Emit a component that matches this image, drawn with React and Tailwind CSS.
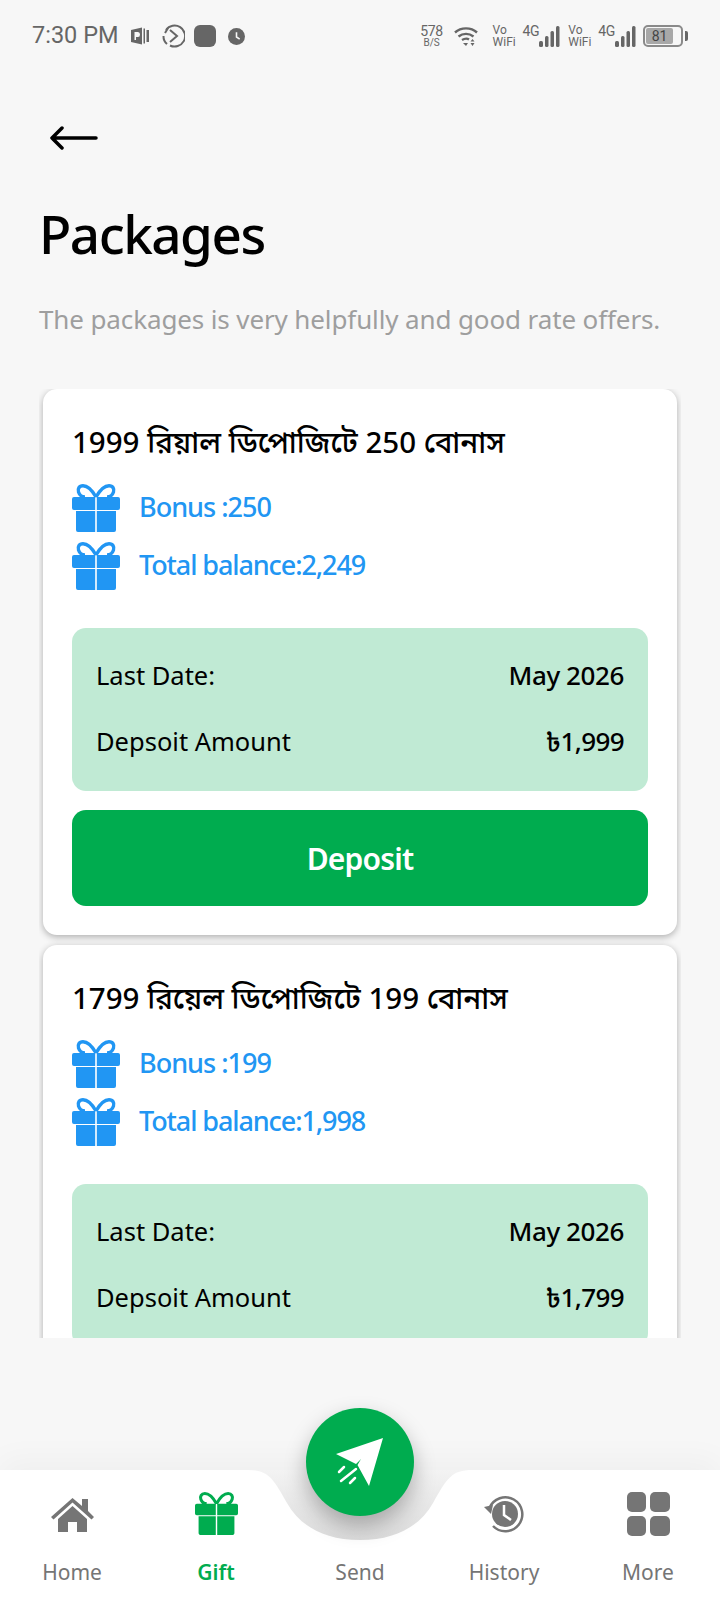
import React from 'react';

const packages = [
  { title: '1999 রিয়াল ডিপোজিটে 250 বোনাস', bonus: '250', total: '2,249', amount: '৳1,999' },
  { title: '1799 রিয়েল ডিপোজিটে 199 বোনাস', bonus: '199', total: '1,998', amount: '৳1,799' },
];

const GiftIcon = ({ className }) => (
  <svg viewBox="0 0 48 48" className={className} fill="currentColor">
    <path d="M24 13 C20 6 15 1.700 11 1.700 C7 1.700 5.500 5 6.500 8 C7.500 11 10 13 13 13 M24 13 C28 6 33 1.700 37 1.700 C41 1.700 42.500 5 41.500 8 C40.500 11 38 13 35 13" fill="none" stroke="currentColor" strokeWidth="3.400" />
    <path d="M2 13 H23.200 V26 H2 Q0 26 0 24 V15 Q0 13 2 13 Z M24.800 13 H46 Q48 13 48 15 V24 Q48 26 46 26 H24.800 Z" />
    <path d="M4 27 H23.200 V48 H6 Q4 48 4 46 Z M24.800 27 H44 V46 Q44 48 42 48 H24.800 Z" />
  </svg>
);

const SignalBars = () => (
  <svg viewBox="0 0 21 21" className="w-[21px] h-[21px]" fill="#666666">
    <rect x="0" y="15" width="4" height="6" rx="1.500" />
    <rect x="6" y="10" width="3.500" height="11" rx="1.500" />
    <rect x="11.500" y="5" width="3.500" height="16" rx="1.500" />
    <rect x="17" y="0" width="3.500" height="21" rx="1.500" />
  </svg>
);

const VoWifi = () => (
  <div className="flex flex-col text-[12px] leading-[12px] w-[24px] whitespace-nowrap">
    <span>Vo</span>
    <span>WiFi</span>
  </div>
);

const StatusBar = () => (
  <div className="h-[72px] flex items-center pl-[32px] pr-[32px] text-[#666666] font-['Roboto',sans-serif]">
    <span className="text-[23.5px] leading-none w-[88px] whitespace-nowrap">7:30 PM</span>
    <svg viewBox="0 0 18 18" className="w-[18px] h-[18px] ml-[11px]" fill="#666666">
      <path d="M0 3 L11 0.500 V17.500 L0 15 Z" />
      <path d="M12.500 1.500 H14 V16.500 H12.500 Z M15.500 3 H18 V15 H15.500 Z" />
      <path d="M3.500 5 H7 Q9 5 9 7.500 Q9 10 7 10 H5 V13 H3.500 Z" fill="#f7f7f7" />
    </svg>
    <svg viewBox="0 0 24 24" className="w-[24px] h-[24px] ml-[12px]" fill="none" stroke="#666666" strokeWidth="2">
      <path d="M5 6 A10.500 10.500 0 1 1 9 21.500" />
      <path d="M7 4 L4 9 M2.500 12 A10 10 0 0 0 6 20" />
      <path d="M9 6 L16 12 L9 18" />
    </svg>
    <div className="w-[22px] h-[22px] rounded-[6px] bg-[#666666] ml-[9px]" />
    <svg viewBox="0 0 16 16" className="w-[17px] h-[17px] ml-[12px]">
      <circle cx="8" cy="8" r="8" fill="#666666" />
      <path d="M8 4 V8.500 L11 10.500" stroke="#f7f7f7" strokeWidth="1.500" fill="none" />
    </svg>

    <div className="ml-auto flex items-center">
      <div className="flex flex-col items-center w-[24px] leading-none">
        <span className="text-[14px] leading-[13px] tracking-tight">578</span>
        <span className="text-[10px] leading-[10px]">B/S</span>
      </div>
      <svg viewBox="0 0 24 20" className="w-[24px] h-[20px] ml-[10px]" fill="none" stroke="#666666" strokeWidth="2.400">
        <path d="M1 6.500 C7 1 17 1 23 6.500" />
        <path d="M4.500 10.500 C9 7 15 7 19.500 10.500" />
        <path d="M8 14 C10.500 12.500 13.500 12.500 15 13.500" />
        <path d="M9 17 L12 20 L14 17 Z" fill="#666666" stroke="none" />
        <path d="M18.500 13 L20.500 15.500 H16.500 Z M18.500 20 L16.500 17 H20.500 Z" fill="#666666" stroke="none" />
      </svg>
      <div className="ml-[15px]"><VoWifi /></div>
      <span className="ml-[6px] self-start text-[14px] leading-none tracking-tight">4G</span>
      <SignalBars />
      <div className="ml-[8px]"><VoWifi /></div>
      <span className="ml-[6px] self-start text-[14px] leading-none tracking-tight">4G</span>
      <SignalBars />
      <div className="ml-[7px] w-[40px] h-[22px] rounded-[5px] border-2 border-[#8a8a8a] p-[1px] flex">
        <div className="w-[27px] bg-[#a8a8a8] rounded-[2px] text-[14px] leading-[16px] text-center text-[#444444]">81</div>
      </div>
      <div className="ml-[2px] w-[3px] h-[10px] rounded-r-[2px] bg-[#666666]" />
    </div>
  </div>
);

const PackageCard = ({ pkg }) => (
  <div className="bg-white rounded-[14px] shadow-[0_2px_7px_rgba(0,0,0,0.3)] pt-[29px] px-[29px] pb-[29px] shrink-0">
    <h2 className="text-[29.5px] leading-[48px] font-medium text-black whitespace-nowrap">{pkg.title}</h2>
    <div className="mt-[18px] flex flex-col gap-[10px]">
      <div className="flex items-center gap-[19px] text-[#2196f3]">
        <GiftIcon className="w-[48px] h-[48px]" />
        <span className="text-[27px] leading-none font-medium tracking-[-1px] pb-[3px]">Bonus :{pkg.bonus}</span>
      </div>
      <div className="flex items-center gap-[19px] text-[#2196f3]">
        <GiftIcon className="w-[48px] h-[48px]" />
        <span className="text-[27px] leading-none font-medium tracking-[-1.1px] pb-[3px]">Total balance:{pkg.total}</span>
      </div>
    </div>
    <div className="mt-[38px] bg-[#c0ead4] rounded-[14px] h-[163px] px-[24px] pb-[2px] flex flex-col justify-center gap-[28px] text-black">
      <div className="flex justify-between items-center h-[38px]">
        <span className="text-[25.5px]">Last Date:</span>
        <span className="text-[26px] font-medium tracking-[-0.4px]">May 2026</span>
      </div>
      <div className="flex justify-between items-center h-[38px]">
        <span className="text-[25.5px]">Depsoit Amount</span>
        <span className="text-[26px] font-medium tracking-[-0.6px]">{pkg.amount}</span>
      </div>
    </div>
    <button className="mt-[19px] w-full h-[96px] bg-[#00ac4f] rounded-[14px] text-white text-[30px] font-semibold tracking-[-0.8px]">
      Deposit
    </button>
  </div>
);

const NavItem = ({ label, active, children }) => (
  <div className="flex flex-col items-center">
    <div className="h-[65px] pt-[22px] flex items-start justify-center">{children}</div>
    <span className={active ? 'mt-[22px] text-[21px] leading-[30px] font-semibold text-[#00ac4f]' : 'mt-[22px] text-[21px] leading-[30px] text-[#757575]'}>
      {label}
    </span>
  </div>
);

const BottomNav = () => (
  <div className="relative h-[130px] bg-white shadow-[0_-10px_30px_rgba(0,0,0,0.035)] grid grid-cols-5">
    <svg viewBox="0 0 240 70" className="absolute left-[240px] top-0 w-[240px] h-[70px]">
      <defs>
        <linearGradient id="notch" x1="0" y1="0" x2="0" y2="1">
          <stop offset="0" stopColor="#f3f3f3" />
          <stop offset="1" stopColor="#dcdcdc" />
        </linearGradient>
      </defs>
      <path d="M8 0 C28 0 33 8 47 33 C60 56 84 70 120 70 C156 70 180 56 193 33 C207 8 212 0 232 0 Z" fill="url(#notch)" />
    </svg>

    <NavItem label="Home">
      <svg viewBox="0 0 43 34" className="w-[43px] h-[34px] mt-[6px]" fill="#757575">
        <path d="M21.500 0 L31 8 V1 H37 V13 L43 19 L40.500 21.500 L21.500 4.500 L2.500 21.500 L0 19 Z" />
        <path d="M21.500 8 L36 21 V34 H26 V24 H17 V34 H7 V21 Z" />
      </svg>
    </NavItem>
    <NavItem label="Gift" active>
      <GiftIcon className="w-[43px] h-[43px] text-[#00ac4f]" />
    </NavItem>
    <NavItem label="Send" />
    <NavItem label="History">
      <svg viewBox="0 0 40 38" className="w-[40px] h-[38px] mt-[3px]" fill="none">
        <path d="M5.500 13 A17 17 0 1 1 9 31" stroke="#757575" strokeWidth="2.500" />
        <path d="M0 12 L9 10 L7 19 Z" fill="#757575" />
        <circle cx="21" cy="19" r="13" fill="#757575" />
        <path d="M20 10 V20 L27 25" stroke="#ffffff" strokeWidth="2.500" />
      </svg>
    </NavItem>
    <NavItem label="More">
      <div className="grid grid-cols-2 gap-[4px] w-[43px]">
        <div className="h-[20px] rounded-[5px] bg-[#757575]" />
        <div className="h-[20px] rounded-[5px] bg-[#757575]" />
        <div className="h-[20px] rounded-[5px] bg-[#757575]" />
        <div className="h-[20px] rounded-[5px] bg-[#757575]" />
      </div>
    </NavItem>

    <div className="absolute left-[306px] top-[-62px] w-[108px] h-[108px] rounded-full bg-[#00ac4f] shadow-[0_10px_22px_rgba(0,0,0,0.28)] flex items-center justify-center">
      <svg viewBox="0 0 60 60" className="w-[60px] h-[60px]">
        <path d="M53 6 L6 22 L26 32 L31 27 L27.500 33 L39 54 Z" fill="#ffffff" />
        <g stroke="#ffffff" strokeWidth="2.500" strokeLinecap="round">
          <path d="M9 40 L14 35" />
          <path d="M11 49 L26 37" />
          <path d="M20 51 L25 46" />
        </g>
      </svg>
    </div>
  </div>
);

export default function App() {
  return (
    <div className="w-[720px] h-[1600px] bg-[#f7f7f7] flex flex-col overflow-hidden font-['Noto_Sans','Noto_Sans_Bengali',sans-serif]">
      <StatusBar />

      <div className="pl-[50px] pt-[54px]">
        <svg viewBox="0 0 48 24" className="w-[48px] h-[24px]" fill="none" stroke="#000000" strokeWidth="3.500" strokeLinecap="round" strokeLinejoin="round">
          <path d="M46 12 H2 M12 2 L2 12 L12 22" />
        </svg>
      </div>

      <div className="pl-[39px] mt-[48px]">
        <h1 className="text-[53px] leading-[72px] font-medium text-black tracking-[-1.5px]">Packages</h1>
        <p className="mt-[31px] text-[26px] leading-[36px] text-[#9e9e9e] tracking-[-0.12px] whitespace-nowrap">The packages is very helpfully and good rate offers.</p>
      </div>

      <div className="mt-[52px] mx-[39px] px-[4px] h-[949px] overflow-hidden flex flex-col gap-[10px]">
        {packages.map((pkg) => (
          <PackageCard key={pkg.amount} pkg={pkg} />
        ))}
      </div>

      <div className="flex-1" />
      <BottomNav />
    </div>
  );
}
